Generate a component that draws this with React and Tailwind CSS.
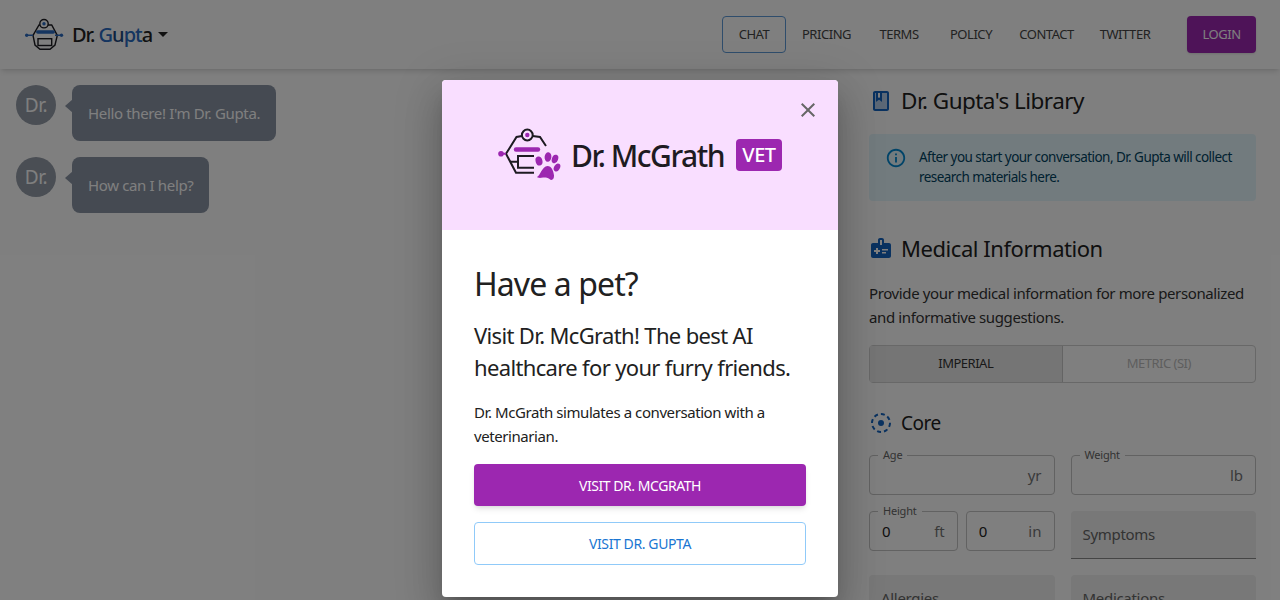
import React from "react";

const font = { fontFamily: '"Noto Sans", sans-serif' };

const DoctorLogo = () => (
  <svg viewBox="4 6 40 34" className="w-10 h-[34px]" fill="none">
    <circle cx="24" cy="11.7" r="4.2" stroke="#1c1c22" strokeWidth="1.4" />
    <circle cx="24" cy="11.7" r="1.7" fill="#2a6bc0" />
    <path d="M20 13h-1l-6 10.3 2 9.7 5 4.3h10l5-4.3 2.3-9.700L31.700 13H28" stroke="#1c1c22" strokeWidth="1.4" />
    <path d="M7 23.3h6M35 23.3h6.5" stroke="#2a6bc0" strokeWidth="1.4" />
    <circle cx="6.7" cy="23.3" r="1.7" fill="#2a6bc0" />
    <circle cx="41.5" cy="23.3" r="1.7" fill="#2a6bc0" />
    <rect x="16" y="18.2" width="19" height="3.6" rx="1.8" fill="#2a6bc0" />
    <rect x="18" y="26.7" width="13.7" height="6.8" stroke="#1c1c22" strokeWidth="1.4" />
  </svg>
);

const VetLogo = () => (
  <svg viewBox="8 7 66 54" className="w-[66px] h-[54px]" fill="none">
    <circle cx="37.3" cy="14" r="5.4" stroke="#1e1b22" strokeWidth="2" />
    <circle cx="37.3" cy="14" r="2.2" fill="#9c27b0" />
    <path d="M32 15l-5.500 1L16 32.700l10 19h18M42.600 15l7.400 1 6 9" stroke="#1e1b22" strokeWidth="2" />
    <path d="M11 32.7h5" stroke="#9c27b0" strokeWidth="2" />
    <circle cx="11" cy="32.7" r="2.8" fill="#9c27b0" />
    <path d="M26 28.5h22" stroke="#9c27b0" strokeWidth="4.4" strokeLinecap="round" />
    <path d="M44 35H28v11.700h16M20 40.700h8" stroke="#1e1b22" strokeWidth="2" />
    <ellipse cx="49" cy="40" rx="3.4" ry="4.6" transform="rotate(-15 49 40)" fill="#9c27b0" />
    <ellipse cx="58" cy="36" rx="3.4" ry="4.8" transform="rotate(5 58 36)" fill="#9c27b0" />
    <ellipse cx="65" cy="38" rx="3.1" ry="4.4" transform="rotate(20 65 38)" fill="#9c27b0" />
    <ellipse cx="67" cy="46.5" rx="2.9" ry="4.2" transform="rotate(30 67 46.5)" fill="#9c27b0" />
    <path d="M47 56c3-1 5-10.500 10.500-11 4 0 6 5 6.500 9.500 .3 4-2.500 5.500-4.500 3.500-3-2-5.500-1.500-8-1.200-2.500 .3-4.500-.3-4.500-.8z" fill="#9c27b0" />
  </svg>
);

const Bubble = ({ text }) => (
  <div className="flex items-start">
    <div className="w-10 h-10 rounded-full bg-[#949ca8] text-white text-[19px] tracking-[-0.5px] flex items-center justify-center">Dr.</div>
    <div className="relative ml-4 bg-[#8a94a4] text-white rounded-lg px-4 py-4 text-[15px] leading-6 tracking-[-0.35px]">
      <span className="absolute -left-[7px] top-[14px] w-0 h-0 border-y-[7px] border-y-transparent border-r-[8px] border-r-[#8a94a4]" />
      {text}
    </div>
  </div>
);

const Outlined = ({ label, value, unit }) => (
  <div className="relative h-10 border border-[#c4c4c4] rounded flex items-center justify-between px-3">
    {label && <span className="absolute -top-[7px] left-2 bg-white px-[5px] text-[11px] leading-3 text-[#666] tracking-[-0.2px]">{label}</span>}
    <span className="text-[#222] text-[15px]">{value}</span>
    <span className="text-[#757575] text-[15px] ml-auto">{unit}</span>
  </div>
);

const Filled = ({ label, className = "" }) => (
  <div className={`h-[48px] bg-[#f0f0f0] rounded-t px-3 pt-3 text-[15px] text-[#666] tracking-[-0.3px] ${className}`}>{label}</div>
);

const navLinks = [
  { label: "PRICING", w: "w-[81px]" },
  { label: "TERMS", w: "w-[64px]" },
  { label: "POLICY", w: "w-[80px]" },
  { label: "CONTACT", w: "w-[71px]" },
  { label: "TWITTER", w: "w-[86px]" },
];

export default function App() {
  return (
    <div className="relative h-[600px] overflow-hidden bg-white text-[#212121]" style={font}>
      <header className="relative z-10 h-[69px] bg-white shadow-md flex items-center pl-6 pr-6">
        <DoctorLogo />
        <div className="ml-2 text-xl font-medium tracking-[-1px] text-[#222]">
          Dr. <span className="text-[#2a6bc0]">G</span><span className="text-[#1f4a80]">u</span><span className="text-[#2a6bc0]">pt</span>a
        </div>
        <svg viewBox="0 0 10 5" className="w-[10px] h-[5px] ml-[6px]"><path d="M0 0h10L5 5z" fill="#222" /></svg>
        <nav className="ml-auto flex items-center text-[13px] text-[#444] tracking-[-0.45px]">
          <div className="w-[64px] h-[37px] border border-[#5f9bd8] rounded flex items-center justify-center">CHAT</div>
          {navLinks.map((link) => (
            <div key={link.label} className={`${link.w} text-center`}>{link.label}</div>
          ))}
          <div className="ml-[19px] w-[69px] h-[37px] bg-[#9c27b0] text-white rounded flex items-center justify-center shadow">LOGIN</div>
        </nav>
      </header>

      <div className="flex h-[531px]">
        <main className="flex-1 pl-4 pt-4 flex flex-col gap-4">
          <Bubble text="Hello there! I'm Dr. Gupta." />
          <Bubble text="How can I help?" />
        </main>
        <aside className="w-[427px] pl-4 pr-6 pt-[17px]">
          <div className="flex items-center gap-2">
            <svg viewBox="0 0 24 24" className="w-6 h-6 text-[#1565c0]" fill="currentColor">
              <path opacity=".3" d="M13 13l-3-2.25L7 13V4H6v16h12V4h-5z" />
              <path d="M18 2H6c-1.1 0-2 .9-2 2v16c0 1.1.9 2 2 2h12c1.1 0 2-.9 2-2V4c0-1.1-.9-2-2-2zM9 4h2v5l-1-.75L9 9V4zm9 16H6V4h1v9l3-2.25L13 13V4h5v16z" />
            </svg>
            <h2 className="text-[22.5px] leading-[30px] tracking-[-0.55px]">Dr. Gupta's Library</h2>
          </div>
          <div className="mt-[18px] h-[67px] bg-[#e5f6fd] rounded flex px-4 pt-[13px]">
            <svg viewBox="0 0 24 24" className="w-[22px] h-[22px] text-[#0288d1] shrink-0" fill="currentColor">
              <path d="M11 7h2v2h-2zm0 4h2v6h-2zm1-9C6.48 2 2 6.48 2 12s4.48 10 10 10 10-4.48 10-10S17.52 2 12 2zm0 18c-4.41 0-8-3.59-8-8s3.59-8 8-8 8 3.59 8 8-3.59 8-8 8z" />
            </svg>
            <p className="ml-3 text-[13.5px] leading-5 text-[#014361] tracking-[-0.55px]">After you start your conversation, Dr. Gupta will collect research materials here.</p>
          </div>
          <div className="mt-8 flex items-center gap-2">
            <svg viewBox="0 0 24 24" className="w-6 h-6 text-[#1565c0]" fill="currentColor">
              <path d="M20 7h-5V4c0-1.1-.9-2-2-2h-2c-1.1 0-2 .9-2 2v3H4c-1.1 0-2 .9-2 2v11c0 1.1.9 2 2 2h16c1.1 0 2-.9 2-2V9c0-1.1-.9-2-2-2zM11 4h2v5h-2V4zm0 12H9v2H7v-2H5v-2h2v-2h2v2h2v2zm2-1.5V13h6v1.5h-6zm0 3V16h4v1.5h-4z" />
            </svg>
            <h2 className="text-[22px] leading-[30px] tracking-[-0.45px]">Medical Information</h2>
          </div>
          <p className="mt-[18px] text-[15px] leading-6 tracking-[-0.38px] text-[#333]">Provide your medical information for more personalized and informative suggestions.</p>
          <div className="mt-4 h-[38px] grid grid-cols-2 border border-[#d0d0d0] rounded text-[13px] tracking-[-0.5px]">
            <div className="bg-[#ebebeb] border-r border-[#c8c8c8] flex items-center justify-center text-[#333]">IMPERIAL</div>
            <div className="flex items-center justify-center text-[#bdbdbd]">METRIC (SI)</div>
          </div>
          <div className="mt-[26px] flex items-center gap-2">
            <svg viewBox="0 0 24 24" className="w-6 h-6 text-[#1565c0]" fill="none">
              <circle cx="12" cy="12" r="9" stroke="currentColor" strokeWidth="2" strokeDasharray="4 3" />
              <circle cx="12" cy="12" r="3" fill="currentColor" />
            </svg>
            <h3 className="text-[19px] leading-7 tracking-[-0.5px]">Core</h3>
          </div>
          <div className="mt-[18px] grid grid-cols-2 gap-4">
            <Outlined label="Age" unit="yr" />
            <Outlined label="Weight" unit="lb" />
            <div className="grid grid-cols-2 gap-2 items-start">
              <Outlined label="Height" value="0" unit="ft" />
              <Outlined value="0" unit="in" />
            </div>
            <Filled label="Symptoms" className="border-b border-[#8a8a8a]" />
            <Filled label="Allergies" />
            <Filled label="Medications" />
          </div>
        </aside>
      </div>

      <div className="absolute inset-0 z-20 bg-black/50" />

      {/* modal */}
      <div className="absolute z-30 left-[442px] top-[80px] w-[396px] h-[517px] bg-white rounded overflow-hidden shadow-[0_11px_15px_-7px_rgba(0,0,0,0.2),0_24px_38px_3px_rgba(0,0,0,0.14),0_9px_46px_8px_rgba(0,0,0,0.12)]">
        <div className="relative h-[150px] bg-[#f9deff] flex items-center justify-center">
          <svg viewBox="0 0 24 24" className="absolute right-[18px] top-[18px] w-6 h-6 text-[#666]" fill="currentColor">
            <path d="M19 6.41 17.59 5 12 10.59 6.41 5 5 6.41 10.59 12 5 17.59 6.41 19 12 13.41 17.59 19 19 17.59 13.41 12z" />
          </svg>
          <VetLogo />
          <div className="ml-[7px] text-[30px] font-medium tracking-[-1.5px] text-[#1e1b22]">Dr. McGrath</div>
          <div className="ml-3 w-[46px] h-8 bg-[#9c27b0] text-white rounded text-xl font-medium flex items-center justify-center tracking-[-0.5px]">VET</div>
        </div>
        <div className="px-8 pt-[35px]">
          <h1 className="text-[32px] leading-[38px] tracking-[-0.9px]">Have a pet?</h1>
          <p className="mt-4 text-[22px] leading-8 tracking-[-0.65px]">Visit Dr. McGrath! The best AI healthcare for your furry friends.</p>
          <p className="mt-[17px] text-[15px] leading-6 tracking-[-0.42px]">Dr. McGrath simulates a conversation with a veterinarian.</p>
          <div className="mt-4 h-[42px] bg-[#9c27b0] text-white rounded shadow-md flex items-center justify-center text-[14px] tracking-[-0.45px]">VISIT DR. MCGRATH</div>
          <div className="mt-4 h-[43px] border border-[#90caf9] text-[#1976d2] rounded flex items-center justify-center text-[14px] tracking-[-0.4px]">VISIT DR. GUPTA</div>
        </div>
      </div>
    </div>
  );
}
